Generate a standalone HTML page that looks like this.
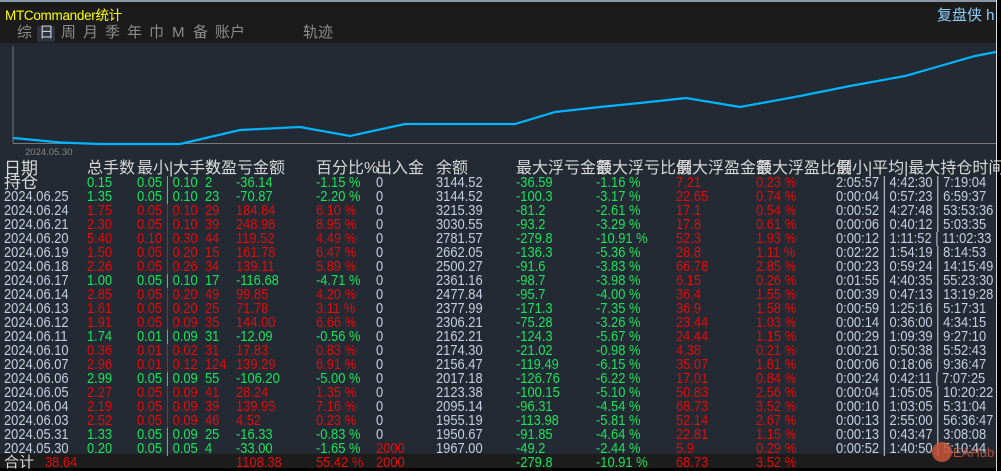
<!DOCTYPE html>
<html><head><meta charset="utf-8"><style>
*{margin:0;padding:0}
body{width:1001px;height:471px;background:#000;position:relative;overflow:hidden;font-family:"Liberation Sans","Noto Sans CJK SC",sans-serif}
.top{position:absolute;left:0;top:0;width:996px;height:43px;background:#1b1b1b;border-top:2px solid #8a97a8;box-sizing:border-box}
.panel{position:absolute;left:0;top:43px;width:996px;height:411px;background:#232a33}
.tot{position:absolute;left:0;top:454px;width:996px;height:14px;background:#1c1c1c}
.vline{position:absolute;left:996px;top:0;width:1px;height:471px;background:#d8d8d8}
.r{position:absolute;left:0;height:14px;font-size:15px;line-height:14px;white-space:nowrap}
.r span{position:absolute;top:0;transform:scaleX(.86);transform-origin:0 0}
.g{color:#19e35c}.d{color:#e30b0b}.w{color:#c4cfe2}
.h{color:#d8d8d8;font-size:16px}
.r.h span{transform:none}
.c1{left:4px}.c2{left:87px}.c3{left:137px}.c4{left:205px}.c5{left:236px}.c6{left:316px}.c7{left:376px}.c8{left:436px}.c9{left:516px}.c10{left:596px}.c11{left:676px}.c12{left:756px}.c13{left:836px}
.tab{position:absolute;top:24px;color:#8c8c8c;font-size:15px;line-height:18px}
</style></head><body>
<div class="top"></div>
<div class="panel"></div>
<div class="tot"></div>
<div class="vline"></div>
<div style="position:absolute;left:5px;top:4px;color:#ffff00;font-size:13.5px;letter-spacing:-0.3px">MTCommander统计</div>
<div style="position:absolute;left:37px;top:26px;width:18px;height:16px;background:#2b3440;border-radius:2px"></div>
<span class="tab" style="left:17px">综</span><span class="tab" style="left:39px;color:#c8c8c8">日</span><span class="tab" style="left:61px">周</span><span class="tab" style="left:83px">月</span><span class="tab" style="left:105px">季</span><span class="tab" style="left:127px">年</span><span class="tab" style="left:149px">巾</span><span class="tab" style="left:172px">M</span><span class="tab" style="left:193px">备</span><span class="tab" style="left:215px">账户</span><span class="tab" style="left:303px">轨迹</span>
<div style="position:absolute;left:937px;top:4px;color:#8fd0ff;font-size:15px">复盘侠 h</div>
<svg style="position:absolute;left:0;top:43px" width="996" height="115">
<line x1="13" y1="3" x2="13" y2="100" stroke="#777" stroke-width="1"/>
<line x1="13" y1="100.5" x2="996" y2="100.5" stroke="#777" stroke-width="1"/>
<polyline fill="none" stroke="#00b4ff" stroke-width="2.2" points="13,95 35,97 60,99.5 100,101 180,101 240,87 300,84 350,93 405,81 460,81 515,81 555,69 600,64 640,60 686,55 740,64 800,53 850,43 905,33 940,23 975,13 996,9"/>
<text x="25" y="112" fill="#888" font-size="9.5" font-family="Liberation Sans">2024.05.30</text>
</svg>
<div class="r h" style="top:160px;height:18px;line-height:18px"><span class="c1" style="font-size:17px">日期</span><span class="c2">总手数</span><span style="left:137px">最小|大手数</span><span style="left:205px">数盈亏金额</span><span class="c6">百分比%</span><span class="c7">出入金</span><span class="c8">余额</span><span class="c9">最大浮亏金额</span><span class="c10">最大浮亏比例</span><span class="c11">最大浮盈金额</span><span class="c12">最大浮盈比例</span><span class="c13">最小|平均|最大持仓时间</span></div>
<div class="r" style="top:176px"><span class="c1 h" style="font-size:17px;transform:none">持仓</span><span class="c2 g">0.15</span><span class="c3 g">0.05 | 0.10</span><span class="c4 g">2</span><span class="c5 g">-36.14</span><span class="c6 g">-1.15 %</span><span class="c7 w">0</span><span class="c8 w">3144.52</span><span class="c9 g">-36.59</span><span class="c10 g">-1.16 %</span><span class="c11 d">7.21</span><span class="c12 d">0.23 %</span><span class="c13 w">2:05:57 | 4:42:30 | 7:19:04</span></div>
<div class="r" style="top:190px"><span class="c1 w">2024.06.25</span><span class="c2 g">1.35</span><span class="c3 g">0.05 | 0.10</span><span class="c4 g">23</span><span class="c5 g">-70.87</span><span class="c6 g">-2.20 %</span><span class="c7 w">0</span><span class="c8 w">3144.52</span><span class="c9 g">-100.3</span><span class="c10 g">-3.17 %</span><span class="c11 d">22.65</span><span class="c12 d">0.74 %</span><span class="c13 w">0:00:04 | 0:57:23 | 6:59:37</span></div>
<div class="r" style="top:204px"><span class="c1 w">2024.06.24</span><span class="c2 d">1.75</span><span class="c3 d">0.05 | 0.10</span><span class="c4 d">29</span><span class="c5 d">184.84</span><span class="c6 d">6.10 %</span><span class="c7 w">0</span><span class="c8 w">3215.39</span><span class="c9 g">-81.2</span><span class="c10 g">-2.61 %</span><span class="c11 d">17.1</span><span class="c12 d">0.54 %</span><span class="c13 w">0:00:52 | 4:27:48 | 53:53:36</span></div>
<div class="r" style="top:218px"><span class="c1 w">2024.06.21</span><span class="c2 d">2.30</span><span class="c3 d">0.05 | 0.10</span><span class="c4 d">39</span><span class="c5 d">248.98</span><span class="c6 d">8.95 %</span><span class="c7 w">0</span><span class="c8 w">3030.55</span><span class="c9 g">-93.2</span><span class="c10 g">-3.29 %</span><span class="c11 d">17.8</span><span class="c12 d">0.61 %</span><span class="c13 w">0:00:06 | 0:40:12 | 5:03:35</span></div>
<div class="r" style="top:232px"><span class="c1 w">2024.06.20</span><span class="c2 d">5.40</span><span class="c3 d">0.10 | 0.30</span><span class="c4 d">44</span><span class="c5 d">119.52</span><span class="c6 d">4.49 %</span><span class="c7 w">0</span><span class="c8 w">2781.57</span><span class="c9 g">-279.8</span><span class="c10 g">-10.91 %</span><span class="c11 d">52.3</span><span class="c12 d">1.93 %</span><span class="c13 w">0:00:12 | 1:11:52 | 11:02:33</span></div>
<div class="r" style="top:246px"><span class="c1 w">2024.06.19</span><span class="c2 d">1.50</span><span class="c3 d">0.05 | 0.20</span><span class="c4 d">15</span><span class="c5 d">161.78</span><span class="c6 d">6.47 %</span><span class="c7 w">0</span><span class="c8 w">2662.05</span><span class="c9 g">-136.3</span><span class="c10 g">-5.36 %</span><span class="c11 d">28.8</span><span class="c12 d">1.11 %</span><span class="c13 w">0:02:22 | 1:54:19 | 8:14:53</span></div>
<div class="r" style="top:260px"><span class="c1 w">2024.06.18</span><span class="c2 d">2.26</span><span class="c3 d">0.05 | 0.26</span><span class="c4 d">34</span><span class="c5 d">139.11</span><span class="c6 d">5.89 %</span><span class="c7 w">0</span><span class="c8 w">2500.27</span><span class="c9 g">-91.6</span><span class="c10 g">-3.83 %</span><span class="c11 d">66.78</span><span class="c12 d">2.85 %</span><span class="c13 w">0:00:23 | 0:59:24 | 14:15:49</span></div>
<div class="r" style="top:274px"><span class="c1 w">2024.06.17</span><span class="c2 g">1.00</span><span class="c3 g">0.05 | 0.10</span><span class="c4 g">17</span><span class="c5 g">-116.68</span><span class="c6 g">-4.71 %</span><span class="c7 w">0</span><span class="c8 w">2361.16</span><span class="c9 g">-98.7</span><span class="c10 g">-3.98 %</span><span class="c11 d">6.15</span><span class="c12 d">0.26 %</span><span class="c13 w">0:01:55 | 4:40:35 | 55:23:30</span></div>
<div class="r" style="top:288px"><span class="c1 w">2024.06.14</span><span class="c2 d">2.85</span><span class="c3 d">0.05 | 0.20</span><span class="c4 d">49</span><span class="c5 d">99.85</span><span class="c6 d">4.20 %</span><span class="c7 w">0</span><span class="c8 w">2477.84</span><span class="c9 g">-95.7</span><span class="c10 g">-4.00 %</span><span class="c11 d">36.4</span><span class="c12 d">1.55 %</span><span class="c13 w">0:00:39 | 0:47:13 | 13:19:28</span></div>
<div class="r" style="top:302px"><span class="c1 w">2024.06.13</span><span class="c2 d">1.61</span><span class="c3 d">0.05 | 0.20</span><span class="c4 d">25</span><span class="c5 d">71.78</span><span class="c6 d">3.11 %</span><span class="c7 w">0</span><span class="c8 w">2377.99</span><span class="c9 g">-171.3</span><span class="c10 g">-7.35 %</span><span class="c11 d">36.9</span><span class="c12 d">1.58 %</span><span class="c13 w">0:00:59 | 1:25:16 | 5:17:31</span></div>
<div class="r" style="top:316px"><span class="c1 w">2024.06.12</span><span class="c2 d">1.91</span><span class="c3 d">0.05 | 0.09</span><span class="c4 d">35</span><span class="c5 d">144.00</span><span class="c6 d">6.66 %</span><span class="c7 w">0</span><span class="c8 w">2306.21</span><span class="c9 g">-75.28</span><span class="c10 g">-3.26 %</span><span class="c11 d">23.44</span><span class="c12 d">1.03 %</span><span class="c13 w">0:00:14 | 0:36:00 | 4:34:15</span></div>
<div class="r" style="top:330px"><span class="c1 w">2024.06.11</span><span class="c2 g">1.74</span><span class="c3 g">0.01 | 0.09</span><span class="c4 g">31</span><span class="c5 g">-12.09</span><span class="c6 g">-0.56 %</span><span class="c7 w">0</span><span class="c8 w">2162.21</span><span class="c9 g">-124.3</span><span class="c10 g">-5.67 %</span><span class="c11 d">24.44</span><span class="c12 d">1.15 %</span><span class="c13 w">0:00:29 | 1:09:39 | 9:27:10</span></div>
<div class="r" style="top:344px"><span class="c1 w">2024.06.10</span><span class="c2 d">0.36</span><span class="c3 d">0.01 | 0.02</span><span class="c4 d">31</span><span class="c5 d">17.83</span><span class="c6 d">0.83 %</span><span class="c7 w">0</span><span class="c8 w">2174.30</span><span class="c9 g">-21.02</span><span class="c10 g">-0.98 %</span><span class="c11 d">4.38</span><span class="c12 d">0.21 %</span><span class="c13 w">0:00:21 | 0:50:38 | 5:52:43</span></div>
<div class="r" style="top:358px"><span class="c1 w">2024.06.07</span><span class="c2 d">2.96</span><span class="c3 d">0.01 | 0.12</span><span class="c4 d">124</span><span class="c5 d">139.29</span><span class="c6 d">6.91 %</span><span class="c7 w">0</span><span class="c8 w">2156.47</span><span class="c9 g">-119.49</span><span class="c10 g">-6.15 %</span><span class="c11 d">35.07</span><span class="c12 d">1.81 %</span><span class="c13 w">0:00:06 | 0:18:06 | 9:36:47</span></div>
<div class="r" style="top:372px"><span class="c1 w">2024.06.06</span><span class="c2 g">2.99</span><span class="c3 g">0.05 | 0.09</span><span class="c4 g">55</span><span class="c5 g">-106.20</span><span class="c6 g">-5.00 %</span><span class="c7 w">0</span><span class="c8 w">2017.18</span><span class="c9 g">-126.76</span><span class="c10 g">-6.22 %</span><span class="c11 d">17.01</span><span class="c12 d">0.84 %</span><span class="c13 w">0:00:24 | 0:42:11 | 7:07:25</span></div>
<div class="r" style="top:386px"><span class="c1 w">2024.06.05</span><span class="c2 d">2.27</span><span class="c3 d">0.05 | 0.09</span><span class="c4 d">41</span><span class="c5 d">28.24</span><span class="c6 d">1.35 %</span><span class="c7 w">0</span><span class="c8 w">2123.38</span><span class="c9 g">-100.15</span><span class="c10 g">-5.10 %</span><span class="c11 d">50.83</span><span class="c12 d">2.56 %</span><span class="c13 w">0:00:04 | 1:05:05 | 10:20:22</span></div>
<div class="r" style="top:400px"><span class="c1 w">2024.06.04</span><span class="c2 d">2.19</span><span class="c3 d">0.05 | 0.09</span><span class="c4 d">39</span><span class="c5 d">139.95</span><span class="c6 d">7.16 %</span><span class="c7 w">0</span><span class="c8 w">2095.14</span><span class="c9 g">-96.31</span><span class="c10 g">-4.54 %</span><span class="c11 d">68.73</span><span class="c12 d">3.52 %</span><span class="c13 w">0:00:10 | 1:03:05 | 5:31:04</span></div>
<div class="r" style="top:414px"><span class="c1 w">2024.06.03</span><span class="c2 d">2.52</span><span class="c3 d">0.05 | 0.09</span><span class="c4 d">46</span><span class="c5 d">4.52</span><span class="c6 d">0.23 %</span><span class="c7 w">0</span><span class="c8 w">1955.19</span><span class="c9 g">-113.98</span><span class="c10 g">-5.81 %</span><span class="c11 d">52.14</span><span class="c12 d">2.67 %</span><span class="c13 w">0:00:13 | 2:55:00 | 56:36:47</span></div>
<div class="r" style="top:428px"><span class="c1 w">2024.05.31</span><span class="c2 g">1.33</span><span class="c3 g">0.05 | 0.09</span><span class="c4 g">25</span><span class="c5 g">-16.33</span><span class="c6 g">-0.83 %</span><span class="c7 w">0</span><span class="c8 w">1950.67</span><span class="c9 g">-91.85</span><span class="c10 g">-4.64 %</span><span class="c11 d">22.81</span><span class="c12 d">1.15 %</span><span class="c13 w">0:00:13 | 0:43:47 | 3:08:08</span></div>
<div class="r" style="top:442px"><span class="c1 w">2024.05.30</span><span class="c2 g">0.20</span><span class="c3 g">0.05 | 0.05</span><span class="c4 g">4</span><span class="c5 g">-33.00</span><span class="c6 g">-1.65 %</span><span class="c7 d">2000</span><span class="c8 w">1967.00</span><span class="c9 g">-49.2</span><span class="c10 g">-2.44 %</span><span class="c11 d">5.9</span><span class="c12 d">0.29 %</span><span class="c13 w">0:00:52 | 1:40:50 | 5:10:44</span></div>
<div class="r" style="top:456px"><span class="c1 h" style="font-size:15px;transform:none">合计</span><span class="c2 d" style="left:45px">38.64</span><span class="c5 d">1108.38</span><span class="c6 d">55.42 %</span><span class="c7 d">2000</span><span class="c9 g">-279.8</span><span class="c10 g">-10.91 %</span><span class="c11 d">68.73</span><span class="c12 d">3.52 %</span></div>
<div style="position:absolute;left:932px;top:442px;width:20px;height:20px;border-radius:50%;background:#c8553a;opacity:.85"></div>
<div style="position:absolute;left:953px;top:445px;color:#c8553a;font-size:13px;opacity:.85">EAHub</div>
</body></html>
